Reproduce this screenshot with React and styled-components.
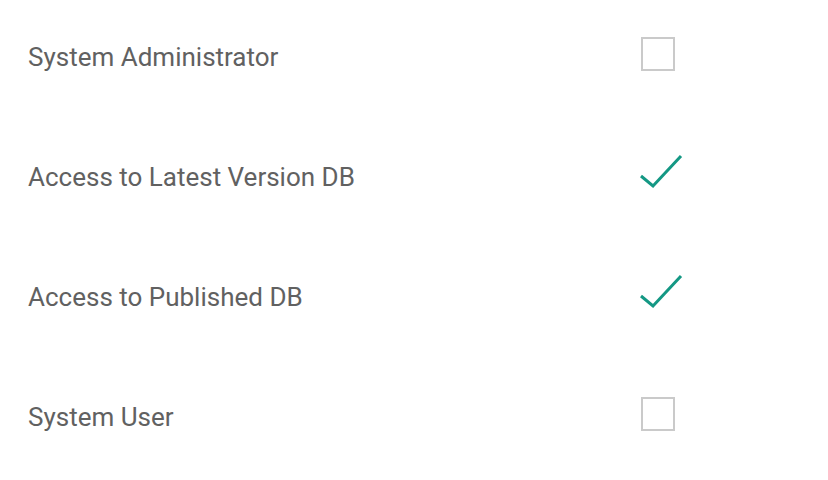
import React from 'react';
import styled, { createGlobalStyle } from 'styled-components';

const GlobalStyle = createGlobalStyle`
  body {
    margin: 0;
    background: #fff;
    font-family: Roboto, "Liberation Sans", sans-serif;
  }
`;

const List = styled.div`
  display: flex;
  flex-direction: column;
  padding: 0 0 0 28px;
`;

const Row = styled.div`
  display: grid;
  grid-template-columns: 612px 48px;
  align-items: center;
  height: 120px;
  margin-top: ${({ first }) => (first ? '-3px' : '0')};
`;

const Label = styled.span`
  font-size: 26px;
  font-weight: 400;
  color: #616161;
  line-height: 30px;
`;

const Box = styled.span`
  box-sizing: border-box;
  display: block;
  width: 34px;
  height: 34px;
  border: 2px solid #cacaca;
  margin-left: 1px;
  margin-top: -6px;
`;

const Check = () => (
  <svg width="44" height="36" viewBox="0 0 44 36" style={{ marginTop: '-10px' }}>
    <path d="M1 22 L13 32 L41 2" fill="none" stroke="#149884" strokeWidth="3" />
  </svg>
);

const items = [
  { label: 'System Administrator', checked: false },
  { label: 'Access to Latest Version DB', checked: true },
  { label: 'Access to Published DB', checked: true },
  { label: 'System User', checked: false },
];

export default function App() {
  return (
    <>
      <GlobalStyle />
      <List>
        {items.map((it, i) => (
          <Row key={it.label} first={i === 0}>
            <Label>{it.label}</Label>
            {it.checked ? <Check /> : <Box />}
          </Row>
        ))}
      </List>
    </>
  );
}
